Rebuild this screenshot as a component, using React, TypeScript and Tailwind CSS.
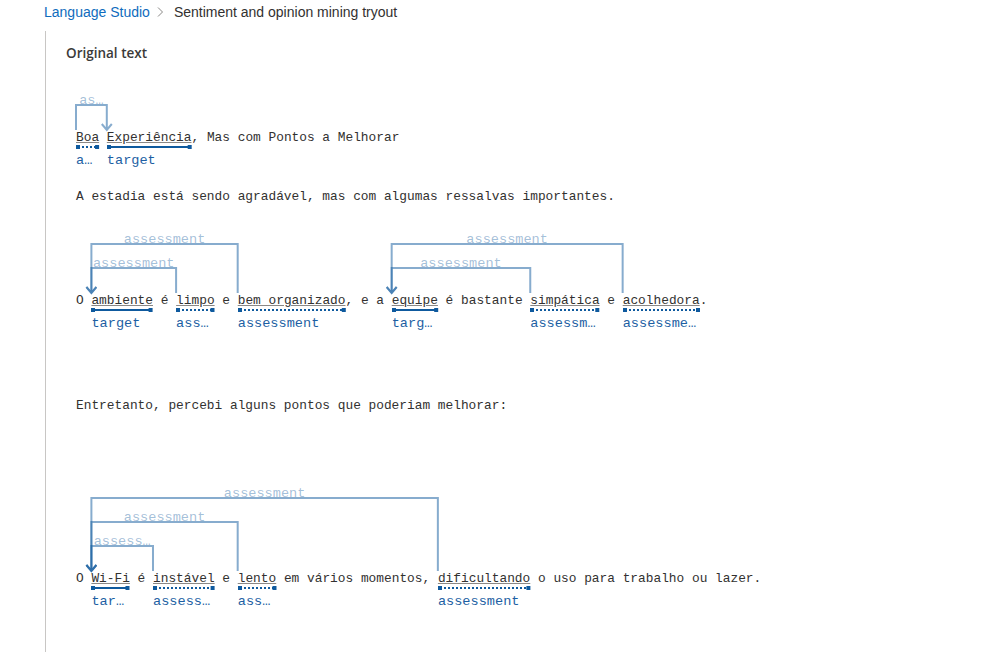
import React from 'react'

// monospace metrics: Liberation Mono advance is 0.6em
const CW = 12.83 * 0.6001
const LW = 13.6 * 0.6001

type Ann = { start: number; end: number; kind: 'target' | 'assessment' }
type Rel = { from: number; to: number; level: number }
type Line = { text: string; mt: string; anns?: Ann[]; rels?: Rel[] }

const LINES: Line[] = [
  {
    text: 'Boa Experiência, Mas com Pontos a Melhorar',
    mt: 'mt-[26px]',
    anns: [
      { start: 0, end: 3, kind: 'assessment' },
      { start: 4, end: 15, kind: 'target' },
    ],
    rels: [{ from: 0, to: 1, level: 1 }],
  },
  { text: 'A estadia está sendo agradável, mas com algumas ressalvas importantes.', mt: 'mt-[18px]' },
  {
    text: 'O ambiente é limpo e bem organizado, e a equipe é bastante simpática e acolhedora.',
    mt: 'mt-[22px]',
    anns: [
      { start: 2, end: 10, kind: 'target' },
      { start: 13, end: 18, kind: 'assessment' },
      { start: 21, end: 35, kind: 'assessment' },
      { start: 41, end: 47, kind: 'target' },
      { start: 59, end: 68, kind: 'assessment' },
      { start: 71, end: 81, kind: 'assessment' },
    ],
    rels: [
      { from: 1, to: 0, level: 1 },
      { from: 2, to: 0, level: 2 },
      { from: 4, to: 3, level: 1 },
      { from: 5, to: 3, level: 2 },
    ],
  },
  { text: 'Entretanto, percebi alguns pontos que poderiam melhorar:', mt: 'mt-[64px]' },
  {
    text: 'O Wi-Fi é instável e lento em vários momentos, dificultando o uso para trabalho ou lazer.',
    mt: 'mt-[67px]',
    anns: [
      { start: 2, end: 7, kind: 'target' },
      { start: 10, end: 18, kind: 'assessment' },
      { start: 21, end: 26, kind: 'assessment' },
      { start: 47, end: 59, kind: 'assessment' },
    ],
    rels: [
      { from: 1, to: 0, level: 1 },
      { from: 2, to: 0, level: 2 },
      { from: 3, to: 0, level: 3 },
    ],
  },
]

// cut a label down to what fits, the way the tryout page does it
function fit(label: string, width: number) {
  const n = Math.floor(width / LW)
  if (n >= label.length) return label
  return label.slice(0, Math.max(n - 1, 1)) + '…'
}

function Arcs({ line }: { line: Line }) {
  const levels = Math.max(...line.rels!.map((r) => r.level))
  const h = 24 * levels + 16
  return (
    <svg width={line.text.length * CW} height={h} className="block overflow-visible">
      {line.rels!.map((r, i) => {
        const xa = line.anns![r.from].start * CW
        const xt = line.anns![r.to].start * CW
        const y = h - 24 * r.level
        const d = `M${xa} ${h + 1}V${y}H${xt}V${h + 1}M${xt - 5} ${h - 5}L${xt} ${h + 1}L${xt + 5} ${h - 5}`
        return (
          <g key={i}>
            <path d={d} fill="none" stroke="#0f5a9e" strokeOpacity={0.5} strokeWidth={2} />
            <text
              x={(xa + xt) / 2}
              y={y - 1.5}
              textAnchor="middle"
              fontSize={13.6}
              fontFamily="'Liberation Mono', monospace"
              fill="#0f5a9e"
              fillOpacity={0.4}
            >
              {fit('assessment', Math.abs(xt - xa))}
            </text>
          </g>
        )
      })}
    </svg>
  )
}

function Token({ text, kind }: { text: string; kind: Ann['kind'] }) {
  const w = text.length * CW
  return (
    <div className="flex flex-col">
      <span className="leading-[18px] underline decoration-[#8a8886] underline-offset-[1px]">{text}</span>
      <svg width={w} height={5} className="block overflow-visible">
        <line
          x1={2}
          x2={w - 2}
          y1={0}
          y2={0}
          stroke="#0f5a9e"
          strokeWidth={2}
          strokeDasharray={kind === 'assessment' ? '2 2' : undefined}
        />
        <rect x={0} y={-2} width={4} height={4} fill="#0f5a9e" />
        <rect x={w - 4} y={-2} width={4} height={4} fill="#0f5a9e" />
      </svg>
      <div className="overflow-hidden whitespace-nowrap text-[13.6px] leading-[18px] text-[#1d5fa3]" style={{ width: w }}>
        {fit(kind, w)}
      </div>
    </div>
  )
}

function SentenceLine({ line }: { line: Line }) {
  const parts: React.ReactNode[] = []
  let pos = 0
  ;(line.anns ?? []).forEach((a, i) => {
    if (a.start > pos) parts.push(<span key={`p${i}`} className="leading-[18px]">{line.text.slice(pos, a.start)}</span>)
    parts.push(<Token key={`t${i}`} text={line.text.slice(a.start, a.end)} kind={a.kind} />)
    pos = a.end
  })
  if (pos < line.text.length) parts.push(<span key="rest" className="leading-[18px]">{line.text.slice(pos)}</span>)

  return (
    <div className={line.mt}>
      {line.rels && <Arcs line={line} />}
      <div className="flex items-start whitespace-pre">{parts}</div>
    </div>
  )
}

export default function App() {
  return (
    <div className="min-h-screen bg-white font-['Segoe_UI','Liberation_Sans',sans-serif] text-[#323130]">
      <div className="flex h-6 items-center pl-[44px] text-[14px]">
        <span className="text-[#0f6cbd]">Language Studio</span>
        <svg width="12" height="12" viewBox="0 0 12 12" className="ml-[4px] mr-[8px]">
          <path d="M4 1.5l4.5 4.5-4.5 4.5" fill="none" stroke="#8a8886" strokeWidth="1" />
        </svg>
        <span>Sentiment and opinion mining tryout</span>
      </div>

      <div className="ml-[45px] mt-[7px] min-h-[621px] border-l border-[#c8c6c4] pl-[20px] pt-[12px]">
        <div className="font-['Open_Sans',sans-serif] text-[13.5px] font-semibold leading-5 text-[#3b3a39]">Original text</div>
        <div className="pl-[10px] font-['Liberation_Mono',monospace] text-[12.83px] text-[#323130]">
          {LINES.map((l, i) => (
            <SentenceLine key={i} line={l} />
          ))}
        </div>
      </div>
    </div>
  )
}
